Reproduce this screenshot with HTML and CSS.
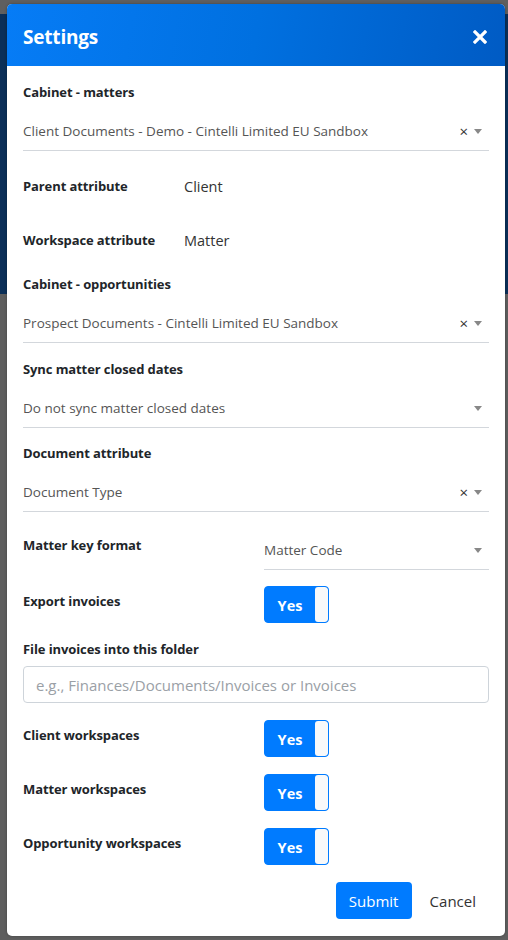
FILE: index.html
```html
<!DOCTYPE html>
<html>
<head>
<meta charset="utf-8">
<link rel="stylesheet" href="styles.css">
</head>
<body>
<div class="modal">
  <div class="modal-header">
    <h1 class="title">Settings</h1>
    <span class="close">
      <svg width="14" height="14" viewBox="0 0 14 14"><path d="M2 2 L12 12 M12 2 L2 12" stroke="#fff" stroke-width="3.2" stroke-linecap="square"/></svg>
    </span>
  </div>
  <div class="modal-body">
    <div class="group g1">
      <div class="label">Cabinet - matters</div>
      <div class="select">
        <span class="sel-text">Client Documents - Demo - Cintelli Limited EU Sandbox</span>
        <span class="clear">×</span><span class="caret"></span>
      </div>
    </div>
    <div class="inline-row r-parent">
      <div class="label">Parent attribute</div>
      <div class="value">Client</div>
    </div>
    <div class="inline-row r-workspace">
      <div class="label">Workspace attribute</div>
      <div class="value">Matter</div>
    </div>
    <div class="group g2">
      <div class="label">Cabinet - opportunities</div>
      <div class="select">
        <span class="sel-text">Prospect Documents - Cintelli Limited EU Sandbox</span>
        <span class="clear">×</span><span class="caret"></span>
      </div>
    </div>
    <div class="group g3">
      <div class="label">Sync matter closed dates</div>
      <div class="select">
        <span class="sel-text">Do not sync matter closed dates</span>
        <span class="caret"></span>
      </div>
    </div>
    <div class="group g4">
      <div class="label">Document attribute</div>
      <div class="select">
        <span class="sel-text">Document Type</span>
        <span class="clear">×</span><span class="caret"></span>
      </div>
    </div>
    <div class="split-row r-key">
      <div class="label lbl-pad">Matter key format</div>
      <div class="select">
        <span class="sel-text">Matter Code</span>
        <span class="caret"></span>
      </div>
    </div>
    <div class="split-row r-toggle r-first">
      <div class="label lbl-pad">Export invoices</div>
      <div class="toggle"><span class="on">Yes</span><span class="knob"></span></div>
    </div>
    <div class="group g5">
      <div class="label">File invoices into this folder</div>
      <input class="text-input" type="text" placeholder="e.g., Finances/Documents/Invoices or Invoices">
    </div>
    <div class="split-row r-toggle">
      <div class="label lbl-pad">Client workspaces</div>
      <div class="toggle"><span class="on">Yes</span><span class="knob"></span></div>
    </div>
    <div class="split-row r-toggle">
      <div class="label lbl-pad">Matter workspaces</div>
      <div class="toggle"><span class="on">Yes</span><span class="knob"></span></div>
    </div>
    <div class="split-row r-toggle">
      <div class="label lbl-pad">Opportunity workspaces</div>
      <div class="toggle"><span class="on">Yes</span><span class="knob"></span></div>
    </div>
    <div class="footer">
      <button class="btn-submit" type="button">Submit</button>
      <button class="btn-cancel" type="button">Cancel</button>
    </div>
  </div>
</div>
</body>
</html>
```
FILE: styles.css
```css
html, body {
  margin: 0;
  height: 940px;
  overflow: hidden;
}
body {
  font-family: "Open Sans", "Noto Sans", sans-serif;
  background:
    linear-gradient(to bottom, #5f5f5f 0, #5f5f5f 14px, #0b2f58 14px, #0b2f58 294px, #5e5e5e 294px, #5e5e5e 100%);
  padding: 4px 3px 0 7px;
  box-sizing: border-box;
}
.modal {
  width: 498px;
  height: 932px;
  background: #fff;
  border-radius: 5px;
  overflow: hidden;
  display: flex;
  flex-direction: column;
  box-shadow: 0 0 3px rgba(0,0,0,0.3);
}
.modal-header {
  height: 62px;
  flex: none;
  background: linear-gradient(100deg, #067cf6 0%, #0070e0 50%, #005bc4 100%);
  display: flex;
  align-items: center;
  justify-content: space-between;
  padding: 3px 18px 0 16px;
  box-sizing: border-box;
}
.title {
  margin: 0;
  color: #fff;
  font-size: 19px;
  font-weight: 700;
  letter-spacing: -0.2px;
}
.close {
  display: flex;
  width: 14px;
  height: 14px;
}
.modal-body {
  padding: 16px 16px 0 16px;
  display: flex;
  flex-direction: column;
}
.label {
  font-size: 13px;
  line-height: 20px;
  font-weight: 700;
  color: #212529;
  letter-spacing: -0.1px;
}
.select {
  height: 38px;
  border-bottom: 1px solid #d3d7dc;
  display: flex;
  align-items: center;
  font-size: 13.5px;
  color: #555;
}
.group .select { margin-top: 10px; }
.sel-text { flex: 1; letter-spacing: 0; }
.clear {
  font-size: 15px;
  color: #333;
  margin-right: 6px;
  line-height: 1;
  margin-top: 1px;
}
.caret {
  width: 0;
  height: 0;
  border-left: 4.5px solid transparent;
  border-right: 4.5px solid transparent;
  border-top: 5px solid #888;
  margin-right: 7px;
  margin-top: 1px;
}
.g1 { margin-bottom: 24px; }
.inline-row {
  display: grid;
  grid-template-columns: 161px 1fr;
  align-items: center;
  height: 20px;
}
.value {
  font-size: 14.5px;
  color: #333;
  padding-top: 2px;
}
.r-parent { margin-bottom: 34px; }
.r-workspace { margin-bottom: 25px; }
.g2 { margin-bottom: 16px; }
.g3 { margin-bottom: 15px; }
.g4 { margin-bottom: 19px; }
.split-row {
  display: grid;
  grid-template-columns: 241px 1fr;
  align-items: start;
}
.lbl-pad { padding-top: 4px; }
.r-key { margin-bottom: 16px; }
.r-toggle { margin-bottom: 17px; }
.r-toggle.r-first { margin-bottom: 16px; }
.r-toggle .lbl-pad { padding-top: 5px; }
.toggle {
  width: 65px;
  height: 37px;
  box-sizing: border-box;
  border: 1px solid #007bff;
  border-radius: 4px;
  background: #007bff;
  display: flex;
  overflow: hidden;
}
.on {
  flex: 1;
  display: flex;
  align-items: center;
  justify-content: center;
  color: #fff;
  font-weight: 700;
  font-size: 14.5px;
  padding-top: 1px;
}
.knob {
  width: 13px;
  background: #f8f9fa;
  border-radius: 3px;
}
.g5 { margin-bottom: 17px; }
.text-input {
  display: block;
  width: 100%;
  margin-top: 7px;
  height: 37px;
  box-sizing: border-box;
  border: 1px solid #ced4da;
  border-radius: 4px;
  padding: 0 12px;
  font-family: "Open Sans", "Noto Sans", sans-serif;
  font-size: 15px;
  color: #495057;
  outline: none;
}
.text-input::placeholder { color: #9aa0a6; }
.footer {
  display: flex;
  justify-content: flex-end;
  align-items: center;
  gap: 8px;
  padding-right: 1px;
}
.btn-submit {
  height: 37px;
  width: 76px;
  border: none;
  border-radius: 4px;
  background: #007bff;
  color: #fff;
  font-family: "Open Sans", "Noto Sans", sans-serif;
  font-size: 15px;
  padding: 0;
}
.btn-cancel {
  height: 37px;
  border: none;
  background: transparent;
  color: #333;
  font-family: "Open Sans", "Noto Sans", sans-serif;
  font-size: 15px;
  padding: 0 12px 0 10px;
}
```
